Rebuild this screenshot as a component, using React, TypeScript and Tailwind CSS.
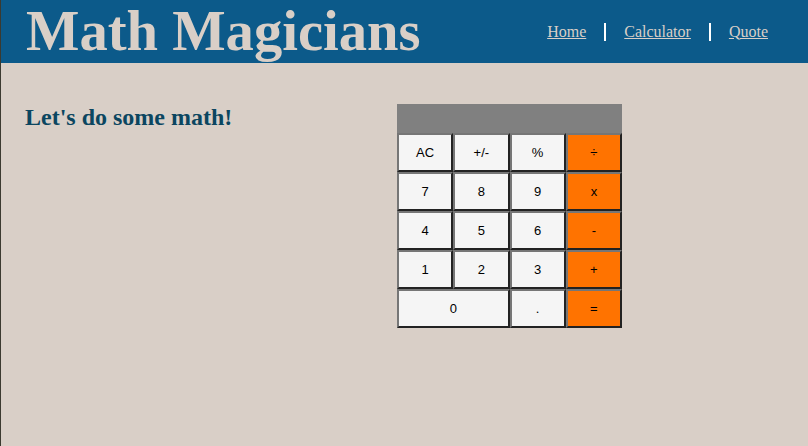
import React from 'react';

const serif = { fontFamily: '"Liberation Serif", "Times New Roman", serif' };
const sans = { fontFamily: '"Liberation Sans", Arial, sans-serif' };

const keys = [
  { label: 'AC' },
  { label: '+/-' },
  { label: '%' },
  { label: '÷', op: true },
  { label: '7' },
  { label: '8' },
  { label: '9' },
  { label: 'x', op: true },
  { label: '4' },
  { label: '5' },
  { label: '6' },
  { label: '-', op: true },
  { label: '1' },
  { label: '2' },
  { label: '3' },
  { label: '+', op: true },
  { label: '0', wide: true },
  { label: '.' },
  { label: '=', op: true },
];

const App: React.FC = () => {
  return (
    <div className="min-h-screen bg-[#d9cfc7] border-l border-[#3b3a30]">
      {/* Header */}
      <header className="h-[63px] bg-[#0c5a8a] flex items-center justify-between pl-[25px] pr-[40px]">
        <h1 className="text-[56.6px] leading-none font-bold text-[#d9cfc7]" style={serif}>
          Math Magicians
        </h1>
        <nav className="flex items-center gap-[18px] text-[16px] text-[#d9cfc7]" style={serif}>
          <a href="#" className="underline">Home</a>
          <span className="w-[2px] h-[18px] bg-white"></span>
          <a href="#" className="underline">Calculator</a>
          <span className="w-[2px] h-[18px] bg-white"></span>
          <a href="#" className="underline">Quote</a>
        </nav>
      </header>

      {/* Main */}
      <main className="flex pt-[41px] pl-[24px]">
        <div className="w-[372px]">
          <h2 className="mt-[1px] text-[24px] leading-none font-bold text-[#0b4660]" style={serif}>
            Let's do some math!
          </h2>
        </div>

        <div className="w-[225px]">
          <div className="h-[29px] bg-[#808080]"></div>
          <div className="grid grid-cols-4" style={sans}>
            {keys.map((k, i) => (
              <button
                key={i}
                className={`h-[39px] border-2 border-t-[#767676] border-l-[#767676] border-r-[#222] border-b-[#222] text-[13px] text-black ${
                  k.op ? 'bg-[#ff7300]' : 'bg-[#f5f5f5]'
                } ${k.wide ? 'col-span-2' : ''}`}
              >
                {k.label}
              </button>
            ))}
          </div>
        </div>
      </main>
    </div>
  );
};

export default App;
